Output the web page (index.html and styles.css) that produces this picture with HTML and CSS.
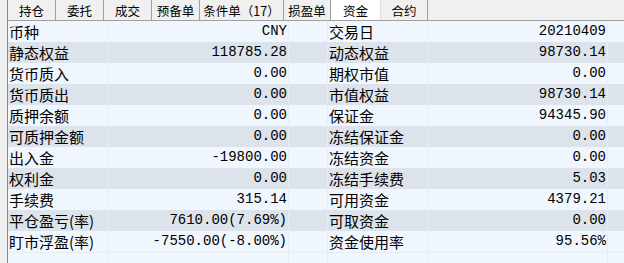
FILE: index.html
```html
<!DOCTYPE html>
<html lang="zh">
<head>
<meta charset="utf-8">
<link rel="stylesheet" href="styles.css">
</head>
<body>
<div class="panel">
  <div class="tabs">
    <div class="tab w48">持仓</div>
    <div class="tab w48">委托</div>
    <div class="tab w48">成交</div>
    <div class="tab w48">预备单</div>
    <div class="tab w84">条件单（17）</div>
    <div class="tab w47">损盈单</div>
    <div class="tab w50 active">资金</div>
    <div class="tab w47">合约</div>
  </div>
  <div class="grid">
    <div class="row light"><div class="c lbl">币种</div><div class="c val">CNY</div><div class="c gap"></div><div class="c lbl">交易日</div><div class="c val">20210409</div><div class="c end"></div></div>
    <div class="row dark"><div class="c lbl">静态权益</div><div class="c val">118785.28</div><div class="c gap"></div><div class="c lbl">动态权益</div><div class="c val">98730.14</div><div class="c end"></div></div>
    <div class="row light"><div class="c lbl">货币质入</div><div class="c val">0.00</div><div class="c gap"></div><div class="c lbl">期权市值</div><div class="c val">0.00</div><div class="c end"></div></div>
    <div class="row dark"><div class="c lbl">货币质出</div><div class="c val">0.00</div><div class="c gap"></div><div class="c lbl">市值权益</div><div class="c val">98730.14</div><div class="c end"></div></div>
    <div class="row light"><div class="c lbl">质押余额</div><div class="c val">0.00</div><div class="c gap"></div><div class="c lbl">保证金</div><div class="c val">94345.90</div><div class="c end"></div></div>
    <div class="row dark"><div class="c lbl">可质押金额</div><div class="c val">0.00</div><div class="c gap"></div><div class="c lbl">冻结保证金</div><div class="c val">0.00</div><div class="c end"></div></div>
    <div class="row light"><div class="c lbl">出入金</div><div class="c val">-19800.00</div><div class="c gap"></div><div class="c lbl">冻结资金</div><div class="c val">0.00</div><div class="c end"></div></div>
    <div class="row dark"><div class="c lbl">权利金</div><div class="c val">0.00</div><div class="c gap"></div><div class="c lbl">冻结手续费</div><div class="c val">5.03</div><div class="c end"></div></div>
    <div class="row light"><div class="c lbl">手续费</div><div class="c val">315.14</div><div class="c gap"></div><div class="c lbl">可用资金</div><div class="c val">4379.21</div><div class="c end"></div></div>
    <div class="row dark"><div class="c lbl">平仓盈亏(率)</div><div class="c val">7610.00(7.69%)</div><div class="c gap"></div><div class="c lbl">可取资金</div><div class="c val">0.00</div><div class="c end"></div></div>
    <div class="row light"><div class="c lbl">盯市浮盈(率)</div><div class="c val">-7550.00(-8.00%)</div><div class="c gap"></div><div class="c lbl">资金使用率</div><div class="c val">95.56%</div><div class="c end"></div></div>
    <div class="row light empty"><div class="c lbl"></div><div class="c val"></div><div class="c gap"></div><div class="c lbl"></div><div class="c val"></div><div class="c end"></div></div>
  </div>
</div>
</body>
</html>
```

FILE: styles.css
```css
html, body {
  margin: 0;
  padding: 0;
  background: #f0f0f0;
  overflow: hidden;
}
body {
  width: 624px;
  height: 263px;
  font-family: "Noto Sans CJK SC", "Liberation Sans", sans-serif;
  color: #000;
}
.panel {
  margin-left: 7px;
  border-left: 1px solid #8c8c8c;
  height: 263px;
  box-sizing: border-box;
}
.tabs {
  display: flex;
  height: 21px;
  box-sizing: border-box;
  border-bottom: 1px solid #a0a0a0;
  background: #f0f0f0;
}
.tab {
  box-sizing: border-box;
  height: 20px;
  line-height: 21px;
  font-size: 12.5px;
  text-align: center;
  border-right: 1px solid #a0a0a0;
  white-space: nowrap;
}
.tab.active {
  background: #ffffff;
  border-right: 1px solid #e0e0e0;
}
.w48 { width: 48px; }
.w84 { width: 84px; }
.w47 { width: 47px; }
.w50 { width: 50px; }
.grid {
  display: flex;
  flex-direction: column;
}
.row {
  display: grid;
  grid-template-columns: 100px 181px 39px 100px 180px 16px;
  height: 21px;
}
.row.light { background: #f0f6fd; }
.row.dark { background: #dce3ea; }
.c {
  box-sizing: border-box;
  height: 21px;
  line-height: 21px;
  border-right: 1px solid #e6ecf2;
  white-space: nowrap;
  overflow: hidden;
}
.c.end { border-right: none; }
.lbl {
  font-size: 15px;
  padding-left: 1px;
}
.val {
  font-family: "Liberation Mono", "DejaVu Sans Mono", monospace;
  font-size: 14px;
  text-align: right;
  padding-right: 1px;
}
.row.empty { border-top: 1px solid #e6ecf2; }
```
